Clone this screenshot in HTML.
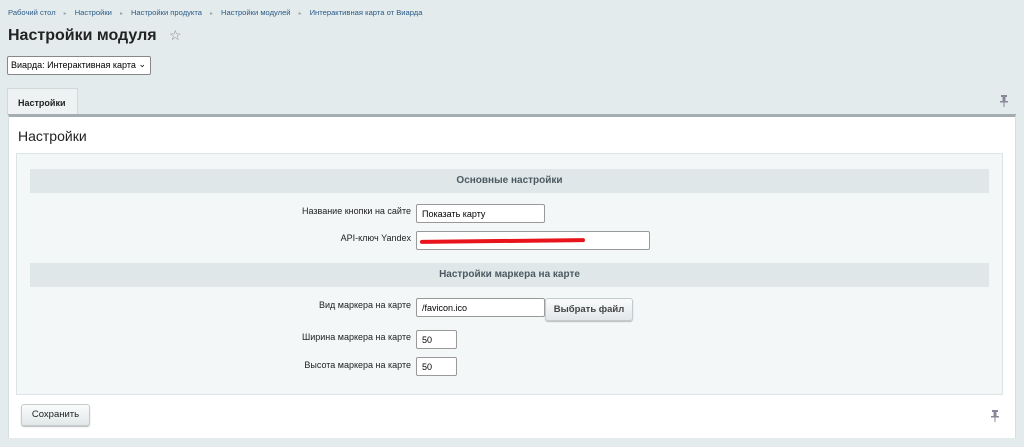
<!DOCTYPE html>
<html><head><meta charset="utf-8"><style>
*{box-sizing:border-box}
body{margin:0;width:1024px;height:447px;background:#e4ebed;font-family:"Liberation Sans",Arial,sans-serif;position:relative;overflow:hidden;color:#000}
.a{position:absolute}
.bc{top:8px;left:8px;font-size:7.6px;color:#2a5b87;white-space:nowrap}
.bc span.s{color:#9aa;margin:0 8px;font-size:6px}
h1{position:absolute;top:27px;left:8px;margin:0;font-size:16px;font-weight:bold;color:#222}
.sel{top:56px;left:7px;width:144px;height:19px;border:1px solid #888;border-radius:2px;background:#fff;font-size:9px;padding:3px 0 0 3px;white-space:nowrap}
.tab{top:88px;left:7px;width:71px;height:27px;background:#eef2f3;border:1px solid #d0d8db;border-bottom:none;font-size:9px;font-weight:bold;padding:9px 0 0 10px;color:#222}
.panel{top:114px;left:8px;width:1008px;height:324px;background:#fff;border-top:3px solid #a4adb1;border-left:1px solid #d6dee1;border-right:1px solid #d6dee1}
.inner{top:153px;left:16px;width:987px;height:242px;background:#f4f7f8;border:1px solid #dde4e6}
.hd{left:30px;width:959px;height:24px;background:#e0e7e9;font-size:10px;font-weight:bold;color:#4b5a60;text-align:center;line-height:24px}
.lb{font-size:9px;color:#222;text-align:right;width:300px;left:111px}
.in{height:19px;border:1px solid #999;border-radius:2px;background:#fff;font-size:9px;padding:4px 0 0 5px}
.btn{background:linear-gradient(#fafcfc,#e2e7e9);border:1px solid #c3cbce;border-radius:3px;font-size:9.5px;box-shadow:0 1px 1px #bbb}
</style></head><body>
<div class="a bc">Рабочий стол<span class="s">▸</span>Настройки<span class="s">▸</span>Настройки продукта<span class="s">▸</span>Настройки модулей<span class="s">▸</span>Интерактивная карта от Виарда</div>
<h1>Настройки модуля <span style="font-weight:normal;color:#888;font-size:14px;margin-left:8px">☆</span></h1>
<div class="a sel">Виарда: Интерактивная карта <span style="position:absolute;right:4px;top:2px;font-size:9px">&#x2304;</span></div>
<div class="a tab">Настройки</div>
<svg class="a" style="top:95px;left:1000px" width="8" height="12"><rect x="1" y="0" width="6" height="2" fill="#889"/><rect x="2.5" y="1" width="3" height="6" fill="#889"/><rect x="0" y="6" width="8" height="1.5" fill="#889"/><rect x="3.5" y="7" width="1" height="5" fill="#889"/></svg>
<div class="a panel"></div>
<div class="a" style="top:128px;left:18px;font-size:14px;color:#222">Настройки</div>
<div class="a inner"></div>
<div class="a hd" style="top:169px">Основные настройки</div>
<div class="a lb" style="top:206px">Название кнопки на сайте</div>
<div class="a in" style="top:204px;left:416px;width:129px">Показать карту</div>
<div class="a lb" style="top:233px">API-ключ Yandex</div>
<div class="a in" style="top:231px;left:416px;width:234px"></div>
<div class="a" style="top:239px;left:420px;width:165px;height:4px;background:#e8131b;border-radius:2px;transform:rotate(-0.6deg)"></div>
<div class="a hd" style="top:263px">Настройки маркера на карте</div>
<div class="a lb" style="top:300px">Вид маркера на карте</div>
<div class="a in" style="top:298px;left:416px;width:129px">/favicon.ico</div>
<div class="a btn" style="top:298px;left:545px;width:88px;height:23px;font-weight:bold;color:#444;text-align:center;line-height:21px">Выбрать файл</div>
<div class="a lb" style="top:332px">Ширина маркера на карте</div>
<div class="a in" style="top:330px;left:416px;width:41px">50</div>
<div class="a lb" style="top:360px">Высота маркера на карте</div>
<div class="a in" style="top:357px;left:416px;width:41px">50</div>
<div class="a btn" style="top:404px;left:21px;width:69px;height:22px;text-align:center;line-height:20px;color:#222">Сохранить</div>
<svg class="a" style="top:410px;left:991px" width="8" height="12"><rect x="1" y="0" width="6" height="2" fill="#889"/><rect x="2.5" y="1" width="3" height="6" fill="#889"/><rect x="0" y="6" width="8" height="1.5" fill="#889"/><rect x="3.5" y="7" width="1" height="5" fill="#889"/></svg>
</body></html>
